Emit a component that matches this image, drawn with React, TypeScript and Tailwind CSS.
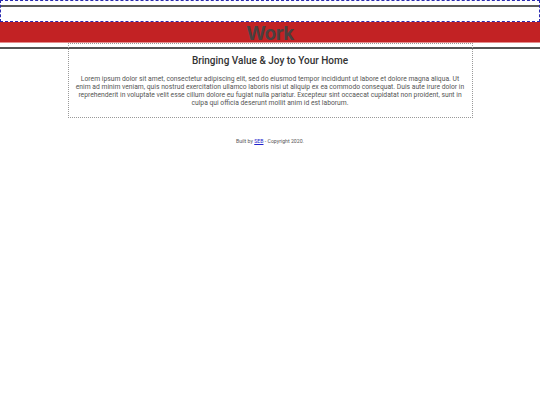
export default function App() {
  return (
    <div className="w-[540px] h-[405px] bg-white" style={{ fontFamily: 'Roboto, "Liberation Sans", sans-serif' }}>
      {/* top nav placeholder */}
      <div className="h-[22px] border border-dashed border-[#2b2bb0] pt-[4px]">
        <div className="h-[2px] bg-[#5a5a5a]"></div>
      </div>

      {/* banner */}
      <div className="h-[21px] bg-[#c22224] border-b border-[#e48c8c] flex items-center justify-center">
        <span className="text-[19px] font-bold leading-none text-[#4a4040] tracking-tight pt-[2px]" style={{ fontFamily: 'Inter, "Noto Sans", sans-serif' }}>
          Work
        </span>
      </div>

      {/* content */}
      <div className="pt-[4px]">
        <div className="h-[2px] bg-[#555]"></div>
        <div className="w-3/4 mx-auto -mt-[6px] border border-dotted border-[#999] h-[75px] px-[7px] text-center">
          <h2 className="mt-[10px] text-[10px] font-medium leading-[13px] text-[#333]">Bringing Value &amp; Joy to Your Home</h2>
          <p className="mt-[8px] text-[6.75px] font-normal leading-[8px] text-[#555]">
            Lorem ipsum dolor sit amet, consectetur adipiscing elit, sed do eiusmod tempor incididunt ut labore et dolore magna aliqua. Ut enim ad minim veniam, quis nostrud exercitation ullamco laboris nisi ut aliquip ex ea commodo consequat. Duis aute irure dolor in reprehenderit in voluptate velit esse cillum dolore eu fugiat nulla pariatur. Excepteur sint occaecat cupidatat non proident, sunt in culpa qui officia deserunt mollit anim id est laborum.
          </p>
        </div>
      </div>

      {/* footer */}
      <div className="mt-[20px] text-center text-[5.2px] text-[#555]">
        Built by <a href="#" className="text-[#2222cc] underline">SEB</a> - Copyright 2020.
      </div>
    </div>
  );
}
